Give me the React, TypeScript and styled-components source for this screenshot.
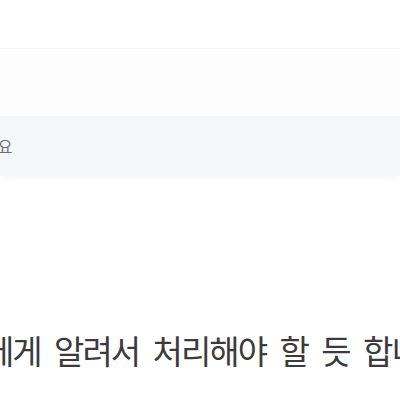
import { Component, ReactNode } from "react";
import styled, { createGlobalStyle } from "styled-components";

const GlobalStyle = createGlobalStyle`
  html, body {
    margin: 0;
    padding: 0;
    background: #ffffff;
  }
  body {
    font-family: "Noto Sans CJK KR", "Noto Sans", sans-serif;
  }
`;

const Page = styled.div`
  width: 400px;
  height: 400px;
  overflow: hidden;
  background: #ffffff;
  display: flex;
  flex-direction: column;
`;

const TopBar = styled.div`
  height: 48px;
  flex-shrink: 0;
  border-bottom: 1px solid #f3f3f5;
`;

const FormArea = styled.div`
  background: #fdfdfd;
  padding-top: 67px;
  display: flex;
  flex-direction: column;
`;

const InputBox = styled.div`
  height: 60px;
  background: #f5f6f8;
  display: flex;
  align-items: center;
  overflow: hidden;
  box-shadow: 0 4px 6px -2px rgba(240, 241, 244, 0.8);
`;

const Placeholder = styled.span`
  margin-left: -17px;
  font-size: 16px;
  color: #6f6f72;
  white-space: nowrap;
`;

const Message = styled.p<{ $offset: number }>`
  margin: 154px 0 0 ${(props) => props.$offset}px;
  font-size: 33px;
  line-height: 40px;
  letter-spacing: -2px;
  word-spacing: 8px;
  color: #3b3b3d;
  white-space: nowrap;
`;

class ReplyNote extends Component {
  render(): ReactNode {
    return (
      <Message $offset={-16}>에게 알려서 처리해야 할 듯 합니다.</Message>
    );
  }
}

export default class App extends Component {
  render(): ReactNode {
    return (
      <Page>
        <GlobalStyle />
        <TopBar />
        <FormArea>
          <InputBox>
            <Placeholder>세요</Placeholder>
          </InputBox>
        </FormArea>
        <ReplyNote />
      </Page>
    );
  }
}
